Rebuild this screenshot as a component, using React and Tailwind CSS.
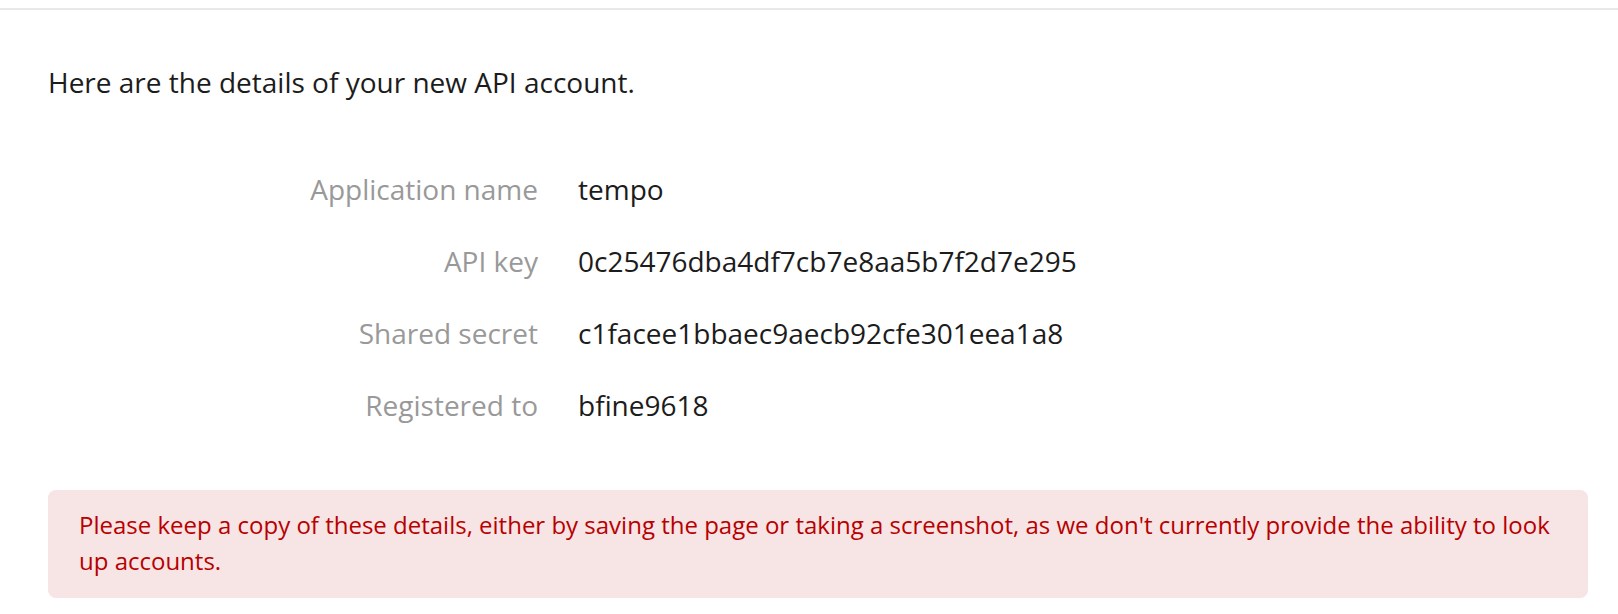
const details = [
  { label: 'Application name', value: 'tempo' },
  { label: 'API key', value: '0c25476dba4df7cb7e8aa5b7f2d7e295' },
  { label: 'Shared secret', value: 'c1facee1bbaec9aecb92cfe301eea1a8' },
  { label: 'Registered to', value: 'bfine9618' },
];

export default function App() {
  return (
    <div className="min-h-screen bg-white font-['Open_Sans',_'Noto_Sans',sans-serif]">
      <div className="h-[10px] border-b-2 border-[#e9e9e9]" />

      <div className="pl-12 pr-[30px] pt-[52px]">
        <p className="text-[28px] leading-[40px] text-[#1c1c1c]">
          Here are the details of your new API account.
        </p>

        <dl className="mt-[51px]">
          {details.map((d) => (
            <div key={d.label} className="flex py-4 text-[28px] leading-[40px]">
              <dt className="w-[490px] shrink-0 text-right text-[#999999]">{d.label}</dt>
              <dd className="pl-[40px] text-[#1c1c1c]">{d.value}</dd>
            </div>
          ))}
        </dl>

        <div className="mt-[49px] rounded-lg bg-[#f7e4e5] pl-[31px] pr-[30px] pt-[17px] pb-[19px] text-[24px] leading-[36px] text-[#b80000]">
          Please keep a copy of these details, either by saving the page or taking a screenshot, as we don't currently provide the ability to look up accounts.
        </div>
      </div>
    </div>
  );
}
